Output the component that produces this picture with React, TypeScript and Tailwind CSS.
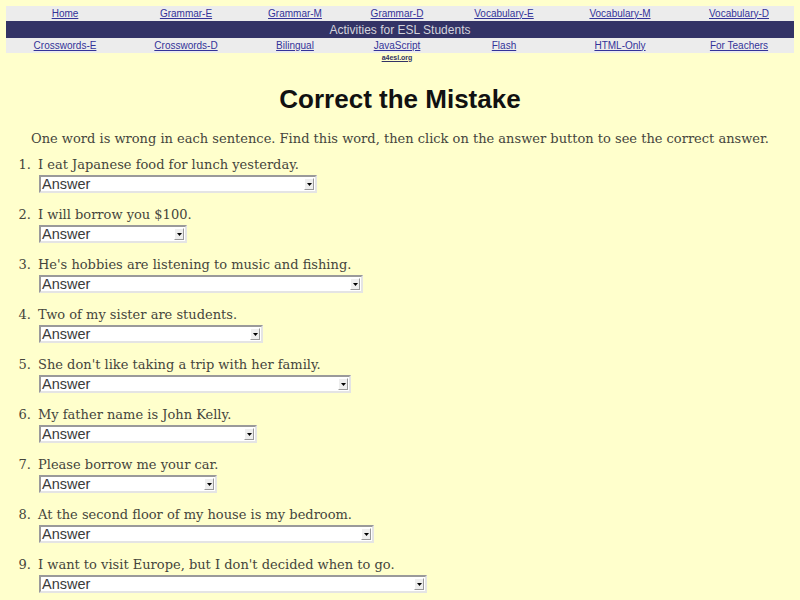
import React from "react";

const row1 = ["Home", "Grammar-E", "Grammar-M", "Grammar-D", "Vocabulary-E", "Vocabulary-M", "Vocabulary-D"];
const row3 = ["Crosswords-E", "Crosswords-D", "Bilingual", "JavaScript", "Flash", "HTML-Only", "For Teachers"];

const items: { text: string; w: number }[] = [
  { text: "I eat Japanese food for lunch yesterday.", w: 278 },
  { text: "I will borrow you $100.", w: 148 },
  { text: "He's hobbies are listening to music and fishing.", w: 324 },
  { text: "Two of my sister are students.", w: 224 },
  { text: "She don't like taking a trip with her family.", w: 312 },
  { text: "My father name is John Kelly.", w: 218 },
  { text: "Please borrow me your car.", w: 178 },
  { text: "At the second floor of my house is my bedroom.", w: 335 },
  { text: "I want to visit Europe, but I don't decided when to go.", w: 388 },
];

const gridCols = "grid grid-cols-[118px_124px_94px_110px_104px_128px_1fr]";

function NavRow({ links }: { links: string[] }) {
  return (
    <div className={`${gridCols} h-[15px] bg-[#ececec] items-center`}>
      {links.map((l) => (
        <div key={l} className="flex justify-center min-w-0">
          <a className="whitespace-nowrap text-[10px] leading-none text-[#333399] underline" href="#">
            {l}
          </a>
        </div>
      ))}
    </div>
  );
}

function FakeSelect({ w }: { w: number }) {
  return (
    <div
      className="ml-[39px] mt-[1px] h-[18px] bg-white border-2 border-t-[#9a9a9a] border-l-[#9a9a9a] border-b-[#e4e4e4] border-r-[#e4e4e4] flex items-center justify-between"
      style={{ width: w }}
    >
      <span className="pl-[1px] text-[14.5px] leading-none text-[#3a3a3a] font-['Liberation_Sans',Arial,sans-serif]">
        Answer
      </span>
      <div className="mr-[1px] w-[10px] h-[12px] bg-[#eeeeee] border border-t-white border-l-white border-b-[#999] border-r-[#999] flex items-center justify-center">
        <svg width="5" height="3" viewBox="0 0 5 3">
          <polygon points="0,0 5,0 2.5,3" fill="#000" />
        </svg>
      </div>
    </div>
  );
}

export default function App() {
  return (
    <div className="w-[800px] h-[600px] overflow-hidden bg-[#ffffcc] font-['DejaVu_Serif',serif] text-[#45453c]">
      <div className="pt-[6px] px-[6px] font-['Liberation_Sans',Arial,sans-serif]">
        <NavRow links={row1} />
        <div className="h-[17px] bg-[#333366] flex items-center justify-center">
          <span className="text-[12px] leading-none text-[#d4d4dc]">Activities for ESL Students</span>
        </div>
        <NavRow links={row3} />
        <div className={`${gridCols} h-[8px] items-center`}>
          <div />
          <div />
          <div />
          <div className="flex justify-center">
            <a href="#" className="text-[7px] leading-none font-bold text-[#333366] underline">
              a4esl.org
            </a>
          </div>
        </div>
      </div>

      <h1 className="mt-[23px] h-[30px] leading-[30px] text-center text-[26px] font-bold text-[#111] font-['Liberation_Sans',Arial,sans-serif]">
        Correct the Mistake
      </h1>

      <p className="mt-[16px] h-[18px] leading-[18px] text-center text-[13px]">
        One word is wrong in each sentence. Find this word, then click on the answer button to see the correct answer.
      </p>

      <div className="mt-[8px]">
        {items.map((it, i) => (
          <div key={i} className="mb-[13px]">
            <div className="flex h-[18px] items-center text-[13px] leading-[18px]">
              <span className="w-[31px] text-right">{i + 1}.</span>
              <span className="ml-[7px] whitespace-nowrap">{it.text}</span>
            </div>
            <FakeSelect w={it.w} />
          </div>
        ))}
      </div>
    </div>
  );
}
